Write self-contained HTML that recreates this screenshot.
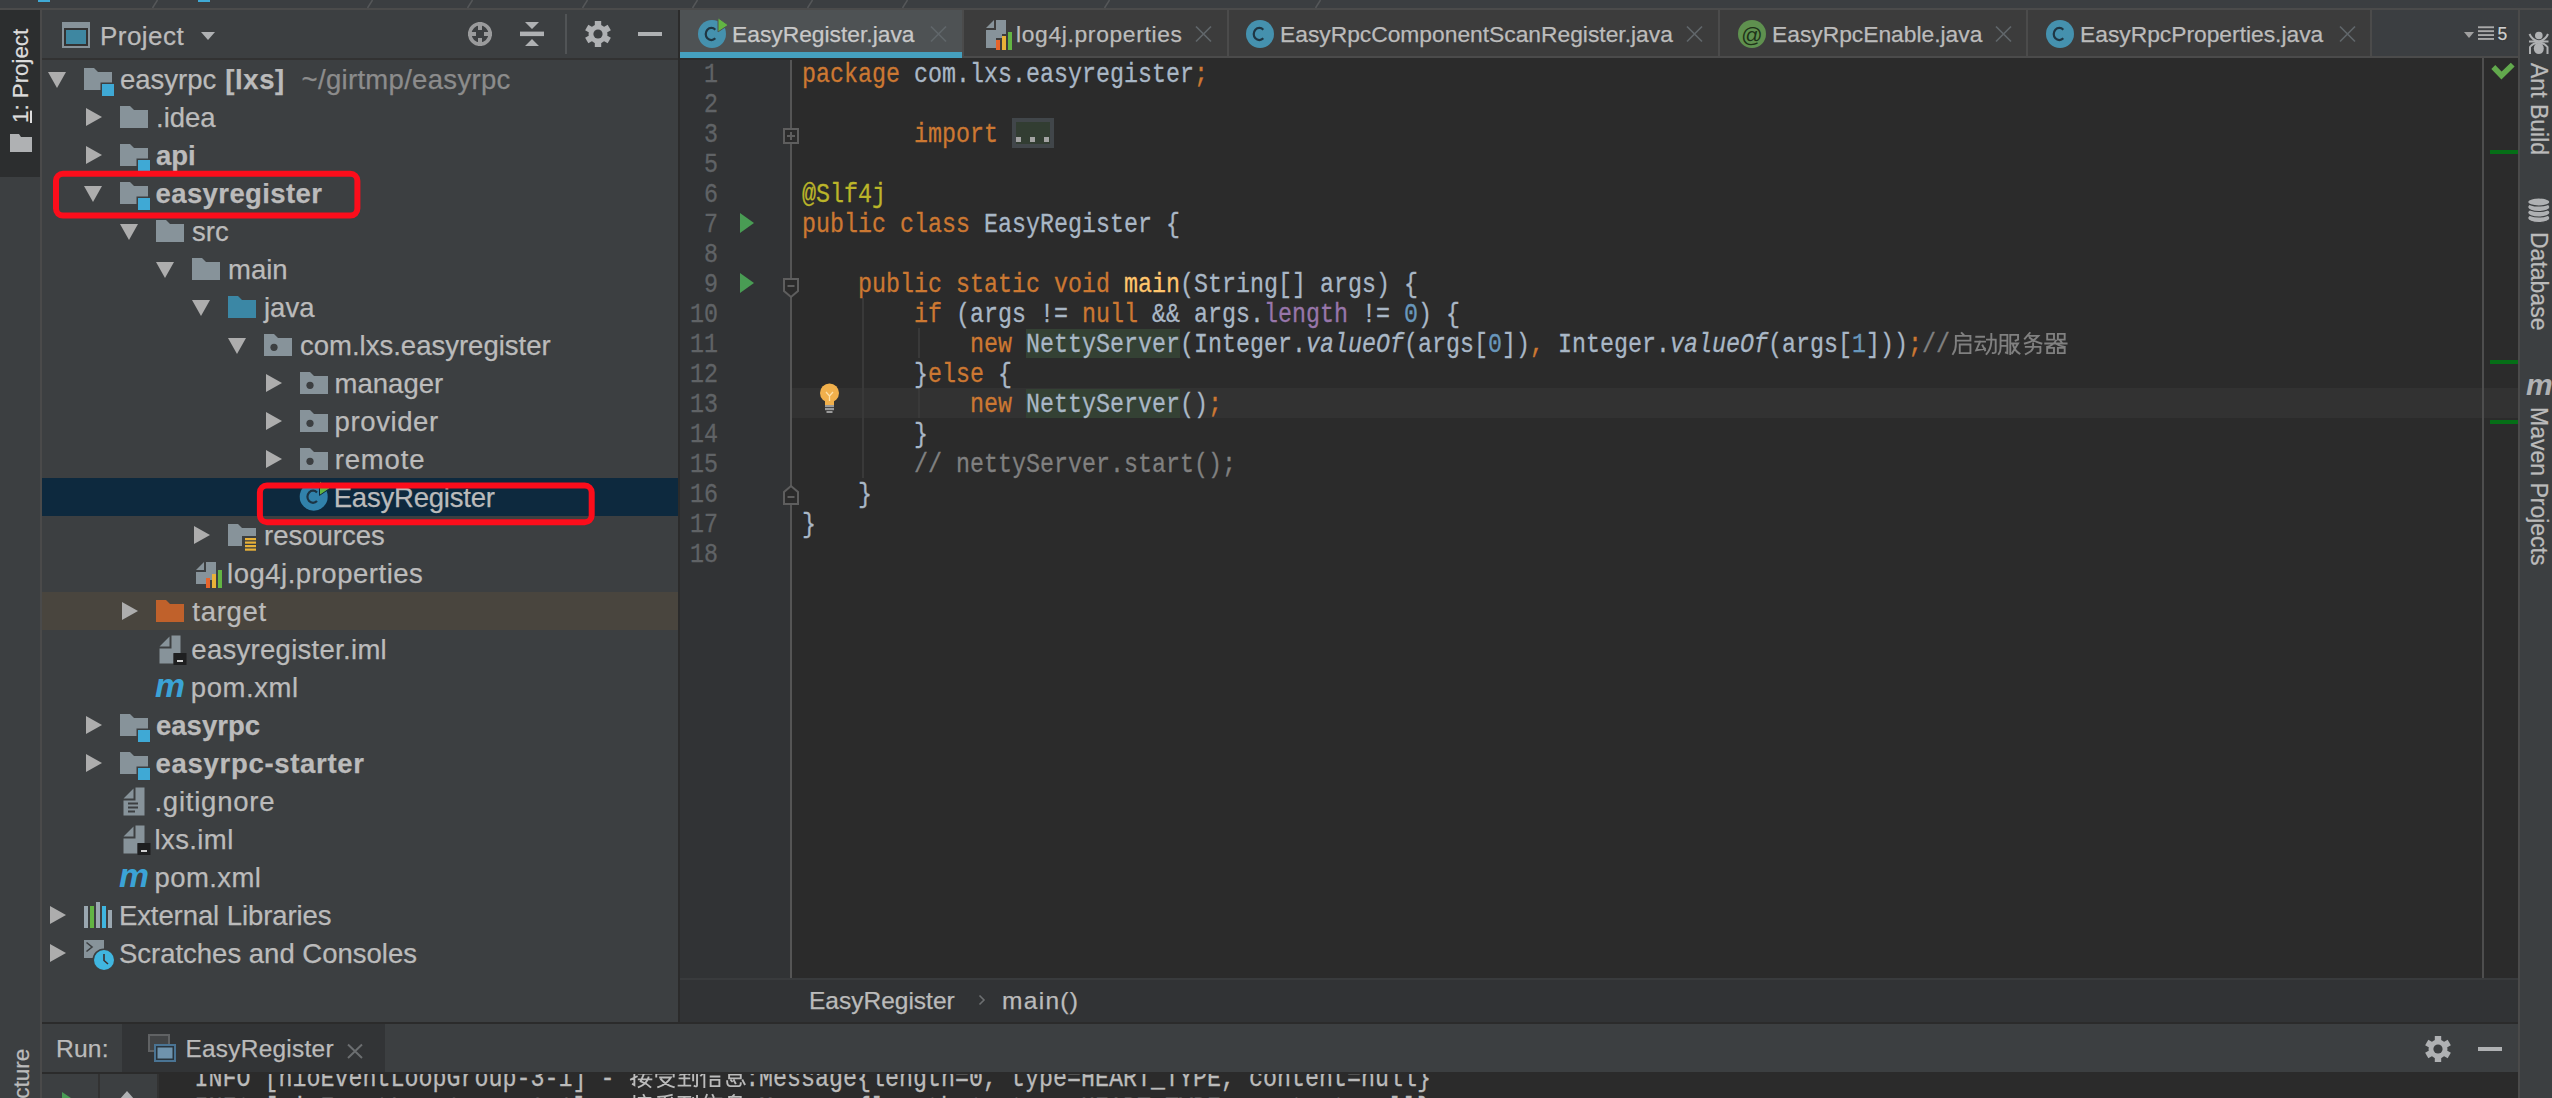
<!DOCTYPE html><html><head><meta charset="utf-8"><style>
html,body{margin:0;padding:0}
body{width:2552px;height:1098px;overflow:hidden;position:relative;background:#3c3f41;font-family:"Liberation Sans",sans-serif;color:#bbbbbb;-webkit-text-stroke:0.25px currentColor}
.a{position:absolute}
.t{position:absolute;white-space:pre;font-size:27.5px;line-height:38px;height:38px}
.b{font-weight:bold}
.code{position:absolute;white-space:pre;font-family:"Liberation Mono",monospace;font-size:23.33px;line-height:30px;height:30px;transform:scaleY(1.15);color:#a9b7c6}
.kw{color:#cc7832}.num{color:#6897bb}.fld{color:#9876aa}.cm{color:#808080}.ann{color:#bbb529}.mth{color:#ffc66d}.it{font-style:italic}
.hl{}
.cjk{display:inline-block;letter-spacing:0}
svg{position:absolute;overflow:visible}
</style></head><body>

<div class="a" style="left:0;top:0;width:2552px;height:8px;background:#3b3e41"></div>
<div class="a" style="left:0;top:8px;width:2552px;height:2px;background:#4b4b4b"></div>
<svg style="left:0;top:0" width="2552" height="10">
<line x1="152.5" y1="8" x2="157.5" y2="0" stroke="#555759" stroke-width="1.5"/>
<line x1="367.5" y1="8" x2="372.5" y2="0" stroke="#555759" stroke-width="1.5"/>
<line x1="467.5" y1="8" x2="472.5" y2="0" stroke="#555759" stroke-width="1.5"/>
<line x1="582.5" y1="8" x2="587.5" y2="0" stroke="#555759" stroke-width="1.5"/>
<line x1="692.5" y1="8" x2="697.5" y2="0" stroke="#555759" stroke-width="1.5"/>
<line x1="807.5" y1="8" x2="812.5" y2="0" stroke="#555759" stroke-width="1.5"/>
<line x1="902.5" y1="8" x2="907.5" y2="0" stroke="#555759" stroke-width="1.5"/>
<line x1="1104.5" y1="8" x2="1109.5" y2="0" stroke="#555759" stroke-width="1.5"/>
<line x1="1315.5" y1="8" x2="1320.5" y2="0" stroke="#555759" stroke-width="1.5"/>
<rect x="38" y="0" width="12" height="2" fill="#3fa9d5"/><rect x="198" y="0" width="12" height="2" fill="#3fa9d5"/>
</svg>
<div class="a" style="left:0;top:10px;width:40px;height:1088px;background:#3c3f41"></div>
<div class="a" style="left:0;top:10px;width:40px;height:167px;background:#2c2e2f"></div>
<div class="a" style="left:40px;top:10px;width:2px;height:1088px;background:#4a4a4a"></div>
<div class="a" style="left:9.2px;top:122.5px;transform-origin:0 0;transform:rotate(-90deg);white-space:pre;font-size:22.3px;line-height:23px;height:23px;color:#dcdcdc"><span style="text-decoration:underline">1</span>: Project</div>
<svg style="left:0;top:0" width="40" height="200"><path d="M10 134 H19 L21 137 H32 V152 H10 Z" fill="#afb1b3"/></svg>
<div class="a" style="left:9.5px;top:1140px;transform-origin:0 0;transform:rotate(-90deg);white-space:pre;font-size:22.5px;line-height:24px;height:24px;color:#bbbbbb">Structure</div>
<div class="a" style="left:42px;top:10px;width:636px;height:1012px;background:#3c3f41"></div>
<div class="a" style="left:42px;top:58px;width:636px;height:2px;background:#323232"></div>
<div class="a" style="left:678px;top:10px;width:2px;height:1014px;background:#2b2b2b"></div>
<svg style="left:0;top:0" width="680" height="60">
<rect x="62" y="22" width="28" height="26" fill="#87939a"/><rect x="64" y="28" width="24" height="18" fill="#333"/><rect x="66" y="30" width="20" height="14" fill="#3e87a1"/>
<path d="M201 32 H215 L208 40 Z" fill="#afb1b3"/>
<circle cx="480" cy="34" r="10.2" fill="none" stroke="#9a9b9c" stroke-width="3.6"/>
<rect x="478" y="22" width="4" height="8" fill="#9a9b9c"/><rect x="478" y="38" width="4" height="8" fill="#9a9b9c"/><rect x="468" y="32" width="8" height="4" fill="#9a9b9c"/><rect x="484" y="32" width="8" height="4" fill="#9a9b9c"/>
<rect x="520" y="31.6" width="24" height="4.5" fill="#afb1b3"/><path d="M525 22 H539 L532 29 Z M525 46 H539 L532 39 Z" fill="#afb1b3"/>
<rect x="565" y="14" width="2" height="40" fill="#515456"/>
</svg>
<div class="a" style="left:100px;top:16.5px;font-size:26px;line-height:38px;white-space:pre;color:#bbbbbb;letter-spacing:0.45px">Project</div>
<svg style="left:0;top:0" width="680" height="60"><g transform="translate(598,34)"><rect x="-3.2" y="-13.0" width="6.4" height="7" fill="#afb1b3" transform="rotate(0)"/><rect x="-3.2" y="-13.0" width="6.4" height="7" fill="#afb1b3" transform="rotate(60)"/><rect x="-3.2" y="-13.0" width="6.4" height="7" fill="#afb1b3" transform="rotate(120)"/><rect x="-3.2" y="-13.0" width="6.4" height="7" fill="#afb1b3" transform="rotate(180)"/><rect x="-3.2" y="-13.0" width="6.4" height="7" fill="#afb1b3" transform="rotate(240)"/><rect x="-3.2" y="-13.0" width="6.4" height="7" fill="#afb1b3" transform="rotate(300)"/><circle r="9.5" fill="#afb1b3"/><circle r="4.6" fill="#3c3f41"/></g><rect x="638" y="32" width="24" height="4" fill="#afb1b3"/></svg>
<div class="a" style="left:42px;top:478px;width:636px;height:38px;background:#0d293e"></div>
<div class="a" style="left:42px;top:592px;width:636px;height:38px;background:#49453e"></div>
<svg style="left:0;top:0" width="680" height="1000">
<path d="M48 72 H66 L57 88 Z" fill="#adadad"/>
<path d="M84 68 H94 L98 72 H112 V90 H84 Z" fill="#87939a"/><rect x="100.5" y="82.5" width="14" height="14" fill="#3c3f41"/><rect x="102" y="84" width="12" height="12" fill="#3fa9d5"/>
<path d="M86 108 L102 117 L86 126 Z" fill="#adadad"/>
<path d="M120 106 H130 L134 110 H148 V128 H120 Z" fill="#87939a"/>
<path d="M86 146 L102 155 L86 164 Z" fill="#adadad"/>
<path d="M120 144 H130 L134 148 H148 V166 H120 Z" fill="#87939a"/><rect x="136.5" y="158.5" width="14" height="14" fill="#3c3f41"/><rect x="138" y="160" width="12" height="12" fill="#3fa9d5"/>
<path d="M84 186 H102 L93 202 Z" fill="#adadad"/>
<path d="M120 182 H130 L134 186 H148 V204 H120 Z" fill="#87939a"/><rect x="136.5" y="196.5" width="14" height="14" fill="#3c3f41"/><rect x="138" y="198" width="12" height="12" fill="#3fa9d5"/>
<path d="M120 224 H138 L129 240 Z" fill="#adadad"/>
<path d="M156 220 H166 L170 224 H184 V242 H156 Z" fill="#87939a"/>
<path d="M156 262 H174 L165 278 Z" fill="#adadad"/>
<path d="M192 258 H202 L206 262 H220 V280 H192 Z" fill="#87939a"/>
<path d="M192 300 H210 L201 316 Z" fill="#adadad"/>
<path d="M228 296 H238 L242 300 H256 V318 H228 Z" fill="#3b87a5"/>
<path d="M228 338 H246 L237 354 Z" fill="#adadad"/>
<path d="M264 334 H274 L278 338 H292 V356 H264 Z" fill="#87939a"/><circle cx="274" cy="347.3" r="3.6" fill="#3c3f41"/>
<path d="M266 374 L282 383 L266 392 Z" fill="#adadad"/>
<path d="M300 372 H310 L314 376 H328 V394 H300 Z" fill="#87939a"/><circle cx="310" cy="385.3" r="3.6" fill="#3c3f41"/>
<path d="M266 412 L282 421 L266 430 Z" fill="#adadad"/>
<path d="M300 410 H310 L314 414 H328 V432 H300 Z" fill="#87939a"/><circle cx="310" cy="423.3" r="3.6" fill="#3c3f41"/>
<path d="M266 450 L282 459 L266 468 Z" fill="#adadad"/>
<path d="M300 448 H310 L314 452 H328 V470 H300 Z" fill="#87939a"/><circle cx="310" cy="461.3" r="3.6" fill="#3c3f41"/>
<circle cx="313.7" cy="496.7" r="14" fill="#3182ab"/><path d="M317 492.4 A5.6 6.1 0 1 0 317 501" fill="none" stroke="#1c3444" stroke-width="2.2"/><path d="M319.5 481 L330 488.3 L319.5 495.4 Z" fill="#62b543" stroke="#0d293e" stroke-width="1"/>
<path d="M194 526 L210 535 L194 544 Z" fill="#adadad"/>
<path d="M228 524 H238 L242 528 H256 V546 H228 Z" fill="#87939a"/><rect x="242" y="536" width="16" height="16" fill="#3c3f41"/><rect x="245" y="538.0" width="11" height="2.2" fill="#e8b238"/><rect x="245" y="541.5" width="11" height="2.2" fill="#e8b238"/><rect x="245" y="545.0" width="11" height="2.2" fill="#e8b238"/><rect x="245" y="548.5" width="11" height="2.2" fill="#e8b238"/>
<path d="M196 570 L204 562 V570 Z M206 562 H216 V576 H212 V580 H206 V584 H196 V572 H206 Z" fill="#87939a"/><rect x="206" y="578" width="4" height="10" fill="#e8642a"/><rect x="212" y="574" width="4" height="14" fill="#e8b238"/><rect x="218" y="570" width="4" height="18" fill="#62b543"/>
<path d="M122 602 L138 611 L122 620 Z" fill="#adadad"/>
<path d="M156 600 H166 L170 604 H184 V622 H156 Z" fill="#c0612b"/>
<path d="M159.5 646.5 L169.5 636.5 V646.5 Z M171.5 635.5 H180.5 V653.5 H173.5 V663.5 H159.5 V648.5 H171.5 Z" fill="#87939a"/><rect x="173.5" y="653" width="13" height="12" fill="#1e1f20"/><rect x="177.0" y="660" width="6" height="2" fill="#d0d0d0"/>
<text x="155" y="697" font-family="Liberation Sans" font-style="italic" font-weight="bold" font-size="34" fill="#3ba3d6" textLength="30" lengthAdjust="spacingAndGlyphs">m</text>
<path d="M86 716 L102 725 L86 734 Z" fill="#adadad"/>
<path d="M120 714 H130 L134 718 H148 V736 H120 Z" fill="#87939a"/><rect x="136.5" y="728.5" width="14" height="14" fill="#3c3f41"/><rect x="138" y="730" width="12" height="12" fill="#3fa9d5"/>
<path d="M86 754 L102 763 L86 772 Z" fill="#adadad"/>
<path d="M120 752 H130 L134 756 H148 V774 H120 Z" fill="#87939a"/><rect x="136.5" y="766.5" width="14" height="14" fill="#3c3f41"/><rect x="138" y="768" width="12" height="12" fill="#3fa9d5"/>
<path d="M123.5 798.5 L133.5 788.5 V798.5 Z M135.5 787.5 H144.5 V815.5 H123.5 V800.5 H135.5 Z" fill="#87939a"/><rect x="128.0" y="802.5" width="10" height="2" fill="#3c3f41"/><rect x="128.0" y="806.5" width="10" height="2" fill="#3c3f41"/><rect x="128.0" y="810.5" width="7" height="2" fill="#3c3f41"/>
<path d="M123.5 836.5 L133.5 826.5 V836.5 Z M135.5 825.5 H144.5 V843.5 H137.5 V853.5 H123.5 V838.5 H135.5 Z" fill="#87939a"/><rect x="137.5" y="843" width="13" height="12" fill="#1e1f20"/><rect x="141.0" y="850" width="6" height="2" fill="#d0d0d0"/>
<text x="119" y="887" font-family="Liberation Sans" font-style="italic" font-weight="bold" font-size="34" fill="#3ba3d6" textLength="30" lengthAdjust="spacingAndGlyphs">m</text>
<path d="M50 906 L66 915 L50 924 Z" fill="#adadad"/>
<rect x="84" y="906" width="4" height="22" fill="#9aa7b0"/><rect x="90" y="906" width="4" height="22" fill="#62b543"/><rect x="96" y="902" width="4" height="26" fill="#9aa7b0"/><rect x="102" y="906" width="4" height="22" fill="#40b6e0"/><rect x="108" y="910" width="4" height="18" fill="#9aa7b0"/>
<path d="M50 944 L66 953 L50 962 Z" fill="#adadad"/>
<rect x="84" y="940" width="20" height="18" fill="#87939a"/><path d="M86.5 942.5 L92 947 L86.5 951.5" fill="none" stroke="#3c3f41" stroke-width="1.6"/><circle cx="104" cy="960" r="11.5" fill="#3c3f41"/><circle cx="104" cy="960" r="10" fill="#40b6e0"/><path d="M104 954 V960.5 L108 964" fill="none" stroke="#3a3030" stroke-width="1.6"/>
</svg>
<div class="t" style="left:120px;top:60.7px;letter-spacing:0px">easyrpc <span class="b" style="letter-spacing:0.6px;margin-left:1.4px">[lxs]</span><span style="color:#8c8c8c;letter-spacing:0.31px;margin-left:0.8px">  ~/girtmp/easyrpc</span></div>
<div class="t" style="left:156px;top:98.7px;letter-spacing:0px">.idea</div>
<div class="t" style="left:156px;top:136.7px;letter-spacing:0px"><span class="b">api</span></div>
<div class="t" style="left:155.5px;top:174.7px;letter-spacing:0.4px"><span class="b">easyregister</span></div>
<div class="t" style="left:192px;top:212.7px;letter-spacing:0px">src</div>
<div class="t" style="left:228px;top:250.7px;letter-spacing:0px">main</div>
<div class="t" style="left:264px;top:288.7px;letter-spacing:0px">java</div>
<div class="t" style="left:300px;top:326.7px;letter-spacing:0px">com.lxs.easyregister</div>
<div class="t" style="left:334.6px;top:364.7px;letter-spacing:0px">manager</div>
<div class="t" style="left:334.6px;top:402.7px;letter-spacing:0.6px">provider</div>
<div class="t" style="left:334.7px;top:440.7px;letter-spacing:0.85px">remote</div>
<div class="t" style="left:333.7px;top:478.7px;letter-spacing:-0.2px">EasyRegister</div>
<div class="t" style="left:264px;top:516.7px;letter-spacing:0px">resources</div>
<div class="t" style="left:227px;top:554.7px;letter-spacing:0.52px">log4j.properties</div>
<div class="t" style="left:192.3px;top:592.7px;letter-spacing:0.7px">target</div>
<div class="t" style="left:191.3px;top:630.7px;letter-spacing:0.29px">easyregister.iml</div>
<div class="t" style="left:190.8px;top:668.7px;letter-spacing:0.58px">pom.xml</div>
<div class="t" style="left:156px;top:706.7px;letter-spacing:0px"><span class="b">easyrpc</span></div>
<div class="t" style="left:155.6px;top:744.7px;letter-spacing:0.69px"><span class="b">easyrpc-starter</span></div>
<div class="t" style="left:154.4px;top:782.7px;letter-spacing:0.78px">.gitignore</div>
<div class="t" style="left:154.6px;top:820.7px;letter-spacing:0.38px">lxs.iml</div>
<div class="t" style="left:154.6px;top:858.7px;letter-spacing:0.38px">pom.xml</div>
<div class="t" style="left:118.9px;top:896.7px;letter-spacing:-0.08px">External Libraries</div>
<div class="t" style="left:118.9px;top:934.7px;letter-spacing:0px">Scratches and Consoles</div>
<svg style="left:0;top:0" width="680" height="600"><rect x="56" y="173.7" width="301.4" height="41.9" rx="7" fill="none" stroke="#fc0d1b" stroke-width="6"/><rect x="259.9" y="485.6" width="331.8" height="36.6" rx="7" fill="none" stroke="#fc0d1b" stroke-width="6"/></svg>
<div class="a" style="left:680px;top:10px;width:1838px;height:48px;background:#3b3e41"></div>
<div class="a" style="left:964px;top:10px;width:1406px;height:46px;background:#3c3c3c"></div>
<div class="a" style="left:964px;top:56px;width:1554px;height:2px;background:#4b4b4b"></div>
<div class="a" style="left:680px;top:10px;width:282px;height:42px;background:#4e5254"></div>
<div class="a" style="left:680px;top:52px;width:282px;height:6px;background:#45a0bf"></div>
<div class="a" style="left:680px;top:58px;width:1838px;height:2px;background:#2b2b2b"></div>
<div class="a" style="left:962px;top:10px;width:2px;height:48px;background:#4b4b4b"></div>
<div class="a" style="left:1227px;top:10px;width:2px;height:48px;background:#4b4b4b"></div>
<div class="a" style="left:1718px;top:10px;width:2px;height:48px;background:#4b4b4b"></div>
<div class="a" style="left:2026px;top:10px;width:2px;height:48px;background:#4b4b4b"></div>
<div class="a" style="left:2370px;top:10px;width:2px;height:48px;background:#4b4b4b"></div>
<svg style="left:0;top:0" width="2552" height="60">
<circle cx="712" cy="34" r="14" fill="#4591ae"/>
<path d="M715.3 29.7 A5.6 6.1 0 1 0 715.3 38.3" fill="none" stroke="#1f3643" stroke-width="2.2"/>
<path d="M718 17.8 L728.3 25.1 L718 31.9 Z" fill="#62b543" stroke="#4e5254" stroke-width="1"/>
<path d="M931 26.5 L946 41.5 M946 26.5 L931 41.5" stroke="#60666a" stroke-width="1.7"/>
<path d="M986 28 L994 20 V28 Z M996 20 H1006 V34 H1002 V38 H996 V48 H986 V30 H996 Z" fill="#87939a"/>
<rect x="996" y="40" width="4" height="10" fill="#e8642a"/><rect x="1002" y="36" width="4" height="14" fill="#e8b238"/><rect x="1008" y="32" width="4" height="18" fill="#62b543"/>
<path d="M1196 26.5 L1211 41.5 M1211 26.5 L1196 41.5" stroke="#60666a" stroke-width="1.7"/>
<circle cx="1260" cy="34" r="14" fill="#4591ae"/>
<path d="M1263.3 29.7 A5.6 6.1 0 1 0 1263.3 38.3" fill="none" stroke="#1f3643" stroke-width="2.2"/>
<path d="M1687 26.5 L1702 41.5 M1702 26.5 L1687 41.5" stroke="#60666a" stroke-width="1.7"/>
<circle cx="1752" cy="34" r="14" fill="#5f914f"/>
<text x="1752" y="41.5" text-anchor="middle" font-family="Liberation Sans" font-size="21" fill="#1e3118">@</text>
<path d="M1996 26.5 L2011 41.5 M2011 26.5 L1996 41.5" stroke="#60666a" stroke-width="1.7"/>
<circle cx="2060" cy="34" r="14" fill="#4591ae"/>
<path d="M2063.3 29.7 A5.6 6.1 0 1 0 2063.3 38.3" fill="none" stroke="#1f3643" stroke-width="2.2"/>
<path d="M2340 26.5 L2355 41.5 M2355 26.5 L2340 41.5" stroke="#60666a" stroke-width="1.7"/>
<path d="M2464 32 H2474 L2469 38 Z" fill="#a0a0a0"/>
<rect x="2478" y="26.3" width="16" height="1.9" fill="#a9a9a9"/>
<rect x="2478" y="30.2" width="16" height="1.9" fill="#a9a9a9"/>
<rect x="2478" y="34.1" width="16" height="1.9" fill="#a9a9a9"/>
<rect x="2478" y="38.0" width="16" height="1.9" fill="#a9a9a9"/>
</svg>
<div class="a" style="left:732px;top:15px;font-size:22.8px;line-height:38px;white-space:pre;color:#c8c8c8;letter-spacing:0px">EasyRegister.java</div>
<div class="a" style="left:1016px;top:15px;font-size:22.8px;line-height:38px;white-space:pre;color:#bbbbbb;letter-spacing:0.67px">log4j.properties</div>
<div class="a" style="left:1280px;top:15px;font-size:22.8px;line-height:38px;white-space:pre;color:#bbbbbb;letter-spacing:0px">EasyRpcComponentScanRegister.java</div>
<div class="a" style="left:1772px;top:15px;font-size:22.8px;line-height:38px;white-space:pre;color:#bbbbbb;letter-spacing:0px">EasyRpcEnable.java</div>
<div class="a" style="left:2080px;top:15px;font-size:22.8px;line-height:38px;white-space:pre;color:#bbbbbb;letter-spacing:0px">EasyRpcProperties.java</div>
<div class="a" style="left:2497.5px;top:15px;font-size:17.5px;line-height:38px;white-space:pre;color:#d0d0d0;text-shadow:0 0 2px #222">5</div>
<div class="a" style="left:680px;top:60px;width:110px;height:918px;background:#313335"></div>
<div class="a" style="left:790px;top:60px;width:2px;height:918px;background:#555555"></div>
<div class="a" style="left:792px;top:60px;width:1690px;height:918px;background:#2b2b2b"></div>
<div class="a" style="left:2484px;top:58px;width:34px;height:920px;background:#2b2b2b"></div>
<div class="a" style="left:792px;top:388px;width:1690px;height:30px;background:#323232"></div>
<div class="a" style="left:2484px;top:388px;width:34px;height:30px;background:#323232"></div>
<div class="a" style="left:2482px;top:58px;width:2px;height:920px;background:#4e4e4e"></div>
<div class="a" style="left:1026px;top:328.5px;width:154px;height:29.5px;background:#344134"></div>
<div class="a" style="left:1026px;top:388.5px;width:154px;height:29.5px;background:#344134"></div>
<div class="a" style="left:1012px;top:118px;width:34px;height:22px;border:4px solid #41464a;background:#323d32"></div>
<div class="a" style="left:1016px;top:137px;width:5px;height:5px;background:#a3a3a3"></div>
<div class="a" style="left:1030px;top:137px;width:5px;height:5px;background:#a3a3a3"></div>
<div class="a" style="left:1044px;top:137px;width:5px;height:5px;background:#a3a3a3"></div>
<div class="a" style="left:862px;top:298px;width:2px;height:180px;background:#393939"></div>
<div class="a" style="left:918px;top:328px;width:2px;height:30px;background:#393939"></div>
<div class="a" style="left:918px;top:388px;width:2px;height:30px;background:#393939"></div>
<div class="code" style="left:680px;top:60px;width:38px;text-align:right;color:#606366">1</div>
<div class="code" style="left:802px;top:60px"><span class="kw">package</span> com.lxs.easyregister<span class="kw">;</span></div>
<div class="code" style="left:680px;top:90px;width:38px;text-align:right;color:#606366">2</div>
<div class="code" style="left:680px;top:120px;width:38px;text-align:right;color:#606366">3</div>
<div class="code" style="left:802px;top:120px">        <span class="kw">import</span></div>
<div class="code" style="left:680px;top:150px;width:38px;text-align:right;color:#606366">5</div>
<div class="code" style="left:680px;top:180px;width:38px;text-align:right;color:#606366">6</div>
<div class="code" style="left:802px;top:180px"><span class="ann">@Slf4j</span></div>
<div class="code" style="left:680px;top:210px;width:38px;text-align:right;color:#606366">7</div>
<div class="code" style="left:802px;top:210px"><span class="kw">public class</span> EasyRegister {</div>
<div class="code" style="left:680px;top:240px;width:38px;text-align:right;color:#606366">8</div>
<div class="code" style="left:680px;top:270px;width:38px;text-align:right;color:#606366">9</div>
<div class="code" style="left:802px;top:270px">    <span class="kw">public static void</span> <span class="mth">main</span>(String[] args) {</div>
<div class="code" style="left:680px;top:300px;width:38px;text-align:right;color:#606366">10</div>
<div class="code" style="left:802px;top:300px">        <span class="kw">if</span> (args != <span class="kw">null</span> &amp;&amp; args.<span class="fld">length</span> != <span class="num">0</span>) {</div>
<div class="code" style="left:680px;top:330px;width:38px;text-align:right;color:#606366">11</div>
<div class="code" style="left:802px;top:330px">            <span class="kw">new</span> <span class="hl">NettyServer</span>(Integer.<span class="it">valueOf</span>(args[<span class="num">0</span>])<span class="kw">,</span> Integer.<span class="it">valueOf</span>(args[<span class="num">1</span>]))<span class="kw">;</span><span class="cm">//<span class="cjk" style="width:116.65px"></span></span></div>
<div class="code" style="left:680px;top:360px;width:38px;text-align:right;color:#606366">12</div>
<div class="code" style="left:802px;top:360px">        }<span class="kw">else</span> {</div>
<div class="code" style="left:680px;top:390px;width:38px;text-align:right;color:#606366">13</div>
<div class="code" style="left:802px;top:390px">            <span class="kw">new</span> <span class="hl">NettyServer</span>()<span class="kw">;</span></div>
<div class="code" style="left:680px;top:420px;width:38px;text-align:right;color:#606366">14</div>
<div class="code" style="left:802px;top:420px">        }</div>
<div class="code" style="left:680px;top:450px;width:38px;text-align:right;color:#606366">15</div>
<div class="code" style="left:802px;top:450px">        <span class="cm">// nettyServer.start();</span></div>
<div class="code" style="left:680px;top:480px;width:38px;text-align:right;color:#606366">16</div>
<div class="code" style="left:802px;top:480px">    }</div>
<div class="code" style="left:680px;top:510px;width:38px;text-align:right;color:#606366">17</div>
<div class="code" style="left:802px;top:510px">}</div>
<div class="code" style="left:680px;top:540px;width:38px;text-align:right;color:#606366">18</div>
<svg style="left:1951px;top:332px;" width="116.6" height="23.0" viewBox="0 0 120 24" preserveAspectRatio="none"><path transform="translate(0,0)" d="M11 1 L13 3 M5 4 H20 V9 H5 M5 4 V13 Q5 19 2 23 M9 13 H20 V22 H9 Z" fill="none" stroke="#808080" stroke-width="1.95" stroke-linecap="square"/><path transform="translate(24,0)" d="M2 5 H10 M1 10 H11 M6 10 L2 19 L11 17.5 M8.5 14 L11 19 M13 8 H22 V20 Q22 22.5 19 22 M17.5 2 V10 Q17 18 12.5 23" fill="none" stroke="#808080" stroke-width="1.95" stroke-linecap="square"/><path transform="translate(48,0)" d="M3 3 V17 Q3 21 1 23 M3 3 H10 V22 L8.5 21.5 M3 9 H10 M3 14.5 H10 M13 3 H21 V8 L18.5 9 M13 3 V23 M14 12 H21 L15 22 M16 14 Q18 20 22.5 22.5" fill="none" stroke="#808080" stroke-width="1.95" stroke-linecap="square"/><path transform="translate(72,0)" d="M9 1 L4 7 M8 4 H18 Q13 10 4 12 M9 6 Q14 10 21 12 M5 15.5 H20 V20.5 Q20 22.5 17 22 M12.5 12 V16 Q12 20 5 23" fill="none" stroke="#808080" stroke-width="1.95" stroke-linecap="square"/><path transform="translate(96,0)" d="M3 2 H10 V8 H3 Z M14 2 H21 V8 H14 Z M1 12 H23 M12 9 Q9 14 3 15.5 M12 12 Q15 14.5 21 15.5 M16.5 9 L18 11 M3 16.5 H10 V22 H3 Z M14 16.5 H21 V22 H14 Z" fill="none" stroke="#808080" stroke-width="1.95" stroke-linecap="square"/></svg>
<svg style="left:0;top:0" width="900" height="600">
<path d="M740 213 L754 223 L740 233 Z" fill="#499c54"/>
<path d="M740 273 L754 283 L740 293 Z" fill="#499c54"/>
<rect x="784" y="129" width="14" height="14" fill="#2b2b2b" stroke="#5e5e5e" stroke-width="2"/><path d="M787 136 H795 M791 132 V140" stroke="#5e5e5e" stroke-width="2"/>
<path d="M784 279 H798 V291 L791 297 L784 291 Z" fill="#2b2b2b" stroke="#5e5e5e" stroke-width="2"/><path d="M787.5 286 H794.5" stroke="#5e5e5e" stroke-width="2"/>
<path d="M784 504 H798 V492 L791 486 L784 492 Z" fill="#2b2b2b" stroke="#5e5e5e" stroke-width="2"/><path d="M787.5 497 H794.5" stroke="#5e5e5e" stroke-width="2"/>
<circle cx="829.5" cy="393" r="9.5" fill="#f1b04c"/><rect x="825" y="399" width="9" height="6" fill="#f1b04c"/><path d="M826 392 L829.5 396 L833 392 M829.5 396 V401" fill="none" stroke="#fde0a8" stroke-width="1.3"/>
<rect x="825" y="405" width="9" height="2.2" fill="#9a9a9a"/><rect x="825" y="408" width="9" height="2.2" fill="#9a9a9a"/><rect x="826.5" y="411" width="6" height="2" fill="#9a9a9a"/>
</svg>
<svg style="left:2480px;top:0" width="40" height="600"><path d="M2493.3 67 L2501.5 75.5 L2512.7 64.6" transform="translate(-2480,0)" fill="none" stroke="#62a94d" stroke-width="5.5" stroke-linejoin="miter"/><rect x="10" y="150" width="28" height="4" fill="#056e16"/><rect x="10" y="360" width="28" height="4" fill="#056e16"/><rect x="10" y="420" width="28" height="4" fill="#056e16"/></svg>
<div class="a" style="left:680px;top:978px;width:1838px;height:2px;background:#393b3d"></div>
<div class="a" style="left:680px;top:980px;width:1838px;height:43px;background:#313335"></div>
<div class="a" style="left:809px;top:982px;font-size:24.5px;line-height:38px;white-space:pre;color:#bbbbbb">EasyRegister</div>
<div class="a" style="left:1002px;top:982px;font-size:24.5px;line-height:38px;white-space:pre;color:#bbbbbb;letter-spacing:1.3px">main()</div>
<svg style="left:970px;top:990px" width="20" height="20"><path d="M9.5 5.5 L14 10 L9.5 14.5" fill="none" stroke="#6d6f71" stroke-width="1.6"/></svg>
<div class="a" style="left:2518px;top:10px;width:2px;height:1088px;background:#4a4a4a"></div>
<div class="a" style="left:2520px;top:10px;width:32px;height:1088px;background:#3c3f41"></div>
<div class="a" style="left:2551px;top:62.5px;transform-origin:0 0;transform:rotate(90deg);white-space:pre;font-size:23px;line-height:24px;height:24px;color:#bbbbbb">Ant Build</div>
<div class="a" style="left:2551px;top:231.5px;transform-origin:0 0;transform:rotate(90deg);white-space:pre;font-size:23px;line-height:24px;height:24px;color:#bbbbbb">Database</div>
<div class="a" style="left:2551px;top:407px;transform-origin:0 0;transform:rotate(90deg);white-space:pre;font-size:23px;line-height:24px;height:24px;color:#bbbbbb">Maven Projects</div>
<svg style="left:2520px;top:0" width="32" height="420"><g fill="#afb1b3"><circle cx="18.8" cy="35.5" r="3.8"/><ellipse cx="18.8" cy="48.5" rx="5" ry="5.5"/></g><g fill="none" stroke="#afb1b3" stroke-width="2"><path d="M9.5 34 Q12 40 18.8 41.5 Q25.5 40 28 34"/><path d="M9 41.5 H28.5"/><path d="M10 54 V47 Q13 43 18.8 42.5 Q24.5 43 27.5 47 V54"/></g><g fill="#afb1b3" stroke="#3c3f41" stroke-width="1.2"><ellipse cx="18.8" cy="218" rx="11.2" ry="4.5"/><ellipse cx="18.8" cy="212.5" rx="11.2" ry="4.5"/><ellipse cx="18.8" cy="207" rx="11.2" ry="4.5"/><ellipse cx="18.8" cy="202" rx="11.2" ry="4"/></g><text x="6" y="395" font-family="Liberation Sans" font-weight="bold" font-style="italic" font-size="30" fill="#afb1b3">m</text></svg>
<div class="a" style="left:42px;top:1022px;width:2476px;height:2px;background:#2b2b2b"></div>
<div class="a" style="left:42px;top:1024px;width:2476px;height:48px;background:#3c3f41"></div>
<div class="a" style="left:122px;top:1024px;width:263px;height:48px;background:#323436"></div>
<div class="a" style="left:42px;top:1072px;width:2476px;height:2px;background:#2b2b2b"></div>
<div class="a" style="left:42px;top:1074px;width:115px;height:24px;background:#3c3f41"></div>
<div class="a" style="left:98px;top:1074px;width:2px;height:24px;background:#323232"></div>
<div class="a" style="left:157px;top:1074px;width:2px;height:24px;background:#323232"></div>
<div class="a" style="left:159px;top:1074px;width:2359px;height:24px;background:#2b2b2b"></div>
<div class="a" style="left:56px;top:1029.5px;font-size:24.6px;line-height:38px;white-space:pre;color:#bbbbbb;letter-spacing:0.2px">Run:</div>
<div class="a" style="left:185.5px;top:1030px;font-size:24.4px;line-height:38px;white-space:pre;color:#bbbbbb;letter-spacing:0.27px">EasyRegister</div>
<svg style="left:0;top:1000px" width="2552" height="98">
<rect x="149" y="35" width="20" height="16" fill="#424446" stroke="#606264" stroke-width="2"/><rect x="155" y="45" width="20" height="16" fill="#29343d" stroke="#4a7494" stroke-width="2"/><rect x="157.5" y="47.5" width="15" height="11" fill="#6f93ad"/>
<path d="M348 44.5 L362 58 M362 44.5 L348 58" stroke="#6b6e70" stroke-width="2"/>
<g transform="translate(2438,49)"><rect x="-3.2" y="-13.0" width="6.4" height="7" fill="#afb1b3" transform="rotate(0)"/><rect x="-3.2" y="-13.0" width="6.4" height="7" fill="#afb1b3" transform="rotate(60)"/><rect x="-3.2" y="-13.0" width="6.4" height="7" fill="#afb1b3" transform="rotate(120)"/><rect x="-3.2" y="-13.0" width="6.4" height="7" fill="#afb1b3" transform="rotate(180)"/><rect x="-3.2" y="-13.0" width="6.4" height="7" fill="#afb1b3" transform="rotate(240)"/><rect x="-3.2" y="-13.0" width="6.4" height="7" fill="#afb1b3" transform="rotate(300)"/><circle r="9.5" fill="#afb1b3"/><circle r="4.6" fill="#3c3f41"/></g>
<rect x="2478" y="47" width="24" height="4" fill="#afb1b3"/>
<path d="M62 92 L74 100 L62 108 Z" fill="#499c54"/><path d="M119 100 L127 91 L135 100 Z" fill="#afb1b3"/>
</svg>
<div class="a" style="left:159px;top:1074px;width:2359px;height:24px;overflow:hidden;background:#2b2b2b"><div class="code" style="left:35.5px;top:-10px;color:#bbbbbb">INFO [nioEventLoopGroup-3-1] - <span class="cjk" style="width:116.65px"></span>:Message{length=0, type=HEART_TYPE, content=null}</div><div class="code" style="left:35.5px;top:19.5px;color:#bbbbbb">INFO [nioEventLoopGroup-3-1] - <span class="cjk" style="width:116.65px"></span>:Message{length=0, type=HEART_TYPE, content=null}</div><svg style="left:470.5px;top:-9.5px;" width="116.6" height="23.0" viewBox="0 0 120 24" preserveAspectRatio="none"><path transform="translate(0,0)" d="M1 8 H7 M4.5 2 V21 L3 20 M1 15 L7 12 M14 1 L15 3 M9 4 H21 M11 5 L12 8 M19 5 L18 8 M9 9 H22 M14 10 L11 17 Q17 19 21 23 M19 13 Q17 20 9 23 M9 15 H22" fill="none" stroke="#bbbbbb" stroke-width="1.95" stroke-linecap="square"/><path transform="translate(24,0)" d="M19 1 Q12 3 5 3 M6 5 L8 8 M12 4 L13 7 M19 4 L17 8 M3 12 V9 H21 V12 M7 13 H18 Q14 20 5 23 M8 15 Q13 21 21 23" fill="none" stroke="#bbbbbb" stroke-width="1.95" stroke-linecap="square"/><path transform="translate(48,0)" d="M2 3 H14 M8 4 L4 10 L13 9 M11 6 L13 10 M3 14 H13 M8 10 V21 M2 21.5 H14 M17 4 V16 M21 2 V21 Q21 23 18.5 22" fill="none" stroke="#bbbbbb" stroke-width="1.95" stroke-linecap="square"/><path transform="translate(72,0)" d="M7 1 Q5 7 1 11 M4.5 7 V23 M13 1 L14 3 M9 5 H22 M11 8.5 H20 M11 12 H20 M11 15.5 H20 V22 H11 Z" fill="none" stroke="#bbbbbb" stroke-width="1.95" stroke-linecap="square"/><path transform="translate(96,0)" d="M11 1 L9 3 M6 3 H18 V14 H6 Z M6 6.5 H18 M6 10 H18 M4 17 Q4 22 7 22 H16 Q18 22 18 19 M11 16 L12.5 19 M8 16 L9 17 M20 16 L22 20" fill="none" stroke="#bbbbbb" stroke-width="1.95" stroke-linecap="square"/></svg><svg style="left:470.5px;top:19.5px;" width="116.6" height="23.0" viewBox="0 0 120 24" preserveAspectRatio="none"><path transform="translate(0,0)" d="M1 8 H7 M4.5 2 V21 L3 20 M1 15 L7 12 M14 1 L15 3 M9 4 H21 M11 5 L12 8 M19 5 L18 8 M9 9 H22 M14 10 L11 17 Q17 19 21 23 M19 13 Q17 20 9 23 M9 15 H22" fill="none" stroke="#bbbbbb" stroke-width="1.95" stroke-linecap="square"/><path transform="translate(24,0)" d="M19 1 Q12 3 5 3 M6 5 L8 8 M12 4 L13 7 M19 4 L17 8 M3 12 V9 H21 V12 M7 13 H18 Q14 20 5 23 M8 15 Q13 21 21 23" fill="none" stroke="#bbbbbb" stroke-width="1.95" stroke-linecap="square"/><path transform="translate(48,0)" d="M2 3 H14 M8 4 L4 10 L13 9 M11 6 L13 10 M3 14 H13 M8 10 V21 M2 21.5 H14 M17 4 V16 M21 2 V21 Q21 23 18.5 22" fill="none" stroke="#bbbbbb" stroke-width="1.95" stroke-linecap="square"/><path transform="translate(72,0)" d="M7 1 Q5 7 1 11 M4.5 7 V23 M13 1 L14 3 M9 5 H22 M11 8.5 H20 M11 12 H20 M11 15.5 H20 V22 H11 Z" fill="none" stroke="#bbbbbb" stroke-width="1.95" stroke-linecap="square"/><path transform="translate(96,0)" d="M11 1 L9 3 M6 3 H18 V14 H6 Z M6 6.5 H18 M6 10 H18 M4 17 Q4 22 7 22 H16 Q18 22 18 19 M11 16 L12.5 19 M8 16 L9 17 M20 16 L22 20" fill="none" stroke="#bbbbbb" stroke-width="1.95" stroke-linecap="square"/></svg></div>
</body></html>
